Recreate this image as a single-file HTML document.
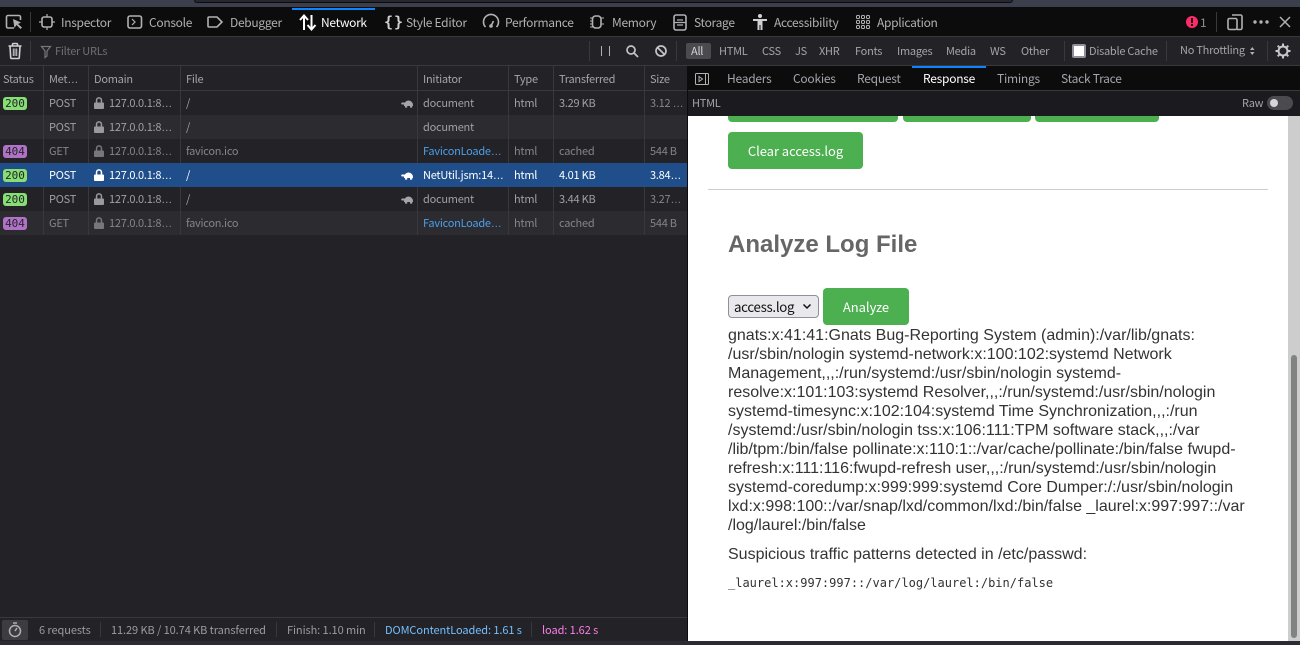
<!DOCTYPE html>
<html><head><meta charset="utf-8"><style>
html,body{margin:0;padding:0;width:1300px;height:645px;overflow:hidden;background:#232327}
*{box-sizing:border-box}
.t{position:absolute;white-space:nowrap;font:12px/16px "Noto Sans CJK JP","Liberation Sans",sans-serif;color:#b1b1b3;letter-spacing:-.25px}
.tb{color:#b1b1b3;font-size:12px;letter-spacing:-.3px}
.f{color:#a5a5a8;font-size:11px}
.s{letter-spacing:-.08px}
.r{position:absolute;left:0;width:688px;height:24px}
.c{color:#a0a0a3;font-size:11px}
.v{position:absolute;width:1px;background:#38383d}
.b{position:absolute;left:3px;width:24px;height:13px;border-radius:3px;font:11px/13px "DejaVu Sans Mono",monospace;text-align:center;color:#26262a}
i{font-family:"Liberation Sans",sans-serif;font-style:normal;letter-spacing:0}
svg{position:absolute;overflow:visible}
.i{fill:none;stroke:#b1b1b3;stroke-width:1.6}
.w{position:absolute;font:16px/19px "Liberation Sans",sans-serif;color:#333;white-space:nowrap}
.g{position:absolute;background:#4caf50;border-radius:4px;color:#fff;text-align:center;font:13px/37px "Noto Sans CJK JP","Liberation Sans",sans-serif;letter-spacing:-.05px}
</style></head><body>
<div style="position:absolute;left:0;top:0;width:1300px;height:7px;background:#3b3e4b"></div>
<div style="position:absolute;left:194px;top:0;width:819px;height:3px;background:#26272f;border:1px solid #0c0c10;border-top:0;border-radius:0 0 4px 4px"></div>
<div style="position:absolute;left:0;top:7px;width:1300px;height:29px;background:#0c0c0d"></div>
<div style="position:absolute;left:0;top:36px;width:1300px;height:1px;background:#38383d"></div>
<div style="position:absolute;left:0;top:37px;width:1300px;height:28px;background:#232327"></div>
<div style="position:absolute;left:0;top:65px;width:1300px;height:1px;background:#38383d"></div>
<div style="position:absolute;left:292px;top:8px;width:83px;height:2px;background:#0a84ff"></div>

<!-- toolbar icons -->
<svg class="i" style="left:0;top:0" width="60" height="36"><path d="M14 28H8a1.500 1.500 0 0 1-1.500-1.500V17A1.500 1.500 0 0 1 8 15.500h11a1.500 1.500 0 0 1 1.500 1.500v3"/><path d="M13 19l1.500 9 2-3 4 4 1.500-1.500-4-3.500 3-1.500z" fill="#b1b1b3" stroke="none"/></svg>
<div style="position:absolute;left:30px;top:12px;width:1px;height:20px;background:#38383d"></div>
<svg class="i" style="left:0;top:0" width="60" height="36"><rect x="42" y="17" width="10" height="10" rx="2"/><path d="M47 14v3M47 27v3M39 22h3M52 22h3" stroke-width="1.200"/></svg>
<div class="t tb" style="left:61px;top:15px">Inspector</div>
<svg class="i" style="left:0;top:0" width="150" height="36"><rect x="128" y="16" width="13.500" height="12" rx="2"/><path d="M132 19l3 3-3 3" stroke-width="1.200"/></svg>
<div class="t tb" style="left:149px;top:15px">Console</div>
<svg class="i" style="left:0;top:0" width="240" height="36"><path d="M209 17h8l5 5-5 5h-8a1 1 0 0 1-1-1v-8a1 1 0 0 1 1-1z"/></svg>
<div class="t tb" style="left:230px;top:15px">Debugger</div>
<svg style="left:0;top:0" width="320" height="36" fill="none" stroke="#fff" stroke-width="2"><path d="M304 30V16M300 20l4-4.500 4 4.500M311.500 15v14M307.500 25l4 4.500 4-4.500"/></svg>
<div class="t tb" style="left:321px;top:15px;color:#fff">Network</div>
<div class="t" style="left:384px;top:12px;font:bold 15px/20px 'DejaVu Sans Mono',monospace;color:#d0d0d2;letter-spacing:1px">{}</div>
<div class="t tb" style="left:406px;top:15px">Style Editor</div>
<svg class="i" style="left:0;top:0" width="520" height="36"><path d="M485.500 27a7.500 7.500 0 1 1 11 0"/><circle cx="491" cy="26" r="1.800" fill="#b1b1b3" stroke="none"/><path d="M491 26l2.500-5"/></svg>
<div class="t tb" style="left:505px;top:15px">Performance</div>
<svg class="i" style="left:0;top:0" width="620" height="36"><rect x="592.500" y="16" width="8.500" height="12" rx="3"/><path d="M590 18h3M590 21h3M590 24h3M590 27h3M601 18h3M601 24h3" stroke-width="1"/></svg>
<div class="t tb" style="left:612px;top:15px">Memory</div>
<svg class="i" style="left:0;top:0" width="700" height="36"><rect x="674" y="15" width="12" height="15" rx="2"/><path d="M677 20h6M677 25h6M674 22.500h12" stroke-width="1.200"/></svg>
<div class="t tb" style="left:694px;top:15px">Storage</div>
<svg style="left:0;top:0" width="780" height="36" fill="#d0d0d2"><circle cx="760" cy="16" r="2"/><path d="M753 19h14v2h-4.500v9h-2v-5h-1v5h-2v-9H753z"/></svg>
<div class="t tb" style="left:774px;top:15px">Accessibility</div>
<svg style="left:0;top:0" width="880" height="36" fill="none" stroke="#b1b1b3" stroke-width="1"><g id="d"><rect x="856.500" y="15.500" width="3" height="3" rx="1"/><rect x="861.500" y="15.500" width="3" height="3" rx="1"/><rect x="866.500" y="15.500" width="3" height="3" rx="1"/><rect x="856.500" y="20.500" width="3" height="3" rx="1"/><rect x="861.500" y="20.500" width="3" height="3" rx="1"/><rect x="866.500" y="20.500" width="3" height="3" rx="1"/><rect x="856.500" y="25.500" width="3" height="3" rx="1"/><rect x="861.500" y="25.500" width="3" height="3" rx="1"/><rect x="866.500" y="25.500" width="3" height="3" rx="1"/></g></svg>
<div class="t tb" style="left:877px;top:15px">Application</div>
<svg style="left:0;top:0" width="1210" height="36"><circle cx="1192" cy="22" r="6" fill="#ff2a6a"/><rect x="1191" y="18" width="2" height="5" fill="#111"/><rect x="1191" y="24" width="2" height="2" fill="#111"/></svg>
<div class="t" style="left:1200px;top:15px;color:#8f8f92">1</div>
<div style="position:absolute;left:1216px;top:12px;width:1px;height:20px;background:#38383d"></div>
<svg class="i" style="left:0;top:0" width="1300" height="36"><rect x="1228" y="18.500" width="9" height="11" rx="1.500"/><path d="M1232 15h8.500a1.500 1.500 0 0 1 1.500 1.500V28a1.500 1.500 0 0 1-1.500 1.500H1237"/><path d="M1280 17l10 10M1290 17l-10 10" stroke-width="1.500"/></svg>
<svg style="left:0;top:0" width="1280" height="36" fill="#b1b1b3"><circle cx="1255" cy="22" r="1.700"/><circle cx="1261" cy="22" r="1.700"/><circle cx="1267" cy="22" r="1.700"/></svg>

<!-- filter bar -->
<svg style="left:0;top:0" width="30" height="66" fill="none" stroke="#d0d0d2" stroke-width="1.600"><path d="M8.500 46h13M12.500 46v-1.500a1 1 0 0 1 1-1h3a1 1 0 0 1 1 1V46M10 46.500l.7 11a1 1 0 0 0 1 1h6.600a1 1 0 0 0 1-1l.7-11"/><path d="M13.300 48.500v7.500M15 48.500v7.500M16.700 48.500v7.500" stroke-width="1"/></svg>
<div style="position:absolute;left:30px;top:41px;width:1px;height:20px;background:#38383d"></div>
<svg style="left:0;top:0" width="60" height="66" fill="none" stroke="#77777a" stroke-width="1.200"><path d="M41.500 46.500h9l-3.500 4.500v5l-2 1.500V51z"/></svg>
<div class="t f" style="left:55px;top:43px;color:#6f6f73">Filter URLs</div>
<div style="position:absolute;left:589px;top:41px;width:1px;height:20px;background:#38383d"></div>
<div style="position:absolute;left:601px;top:46px;width:1px;height:10px;background:#b1b1b3"></div>
<div style="position:absolute;left:609px;top:46px;width:1px;height:10px;background:#b1b1b3"></div>
<svg style="left:0;top:0" width="680" height="66" fill="none" stroke="#c4c4c6" stroke-width="1.700"><circle cx="631" cy="50" r="4"/><path d="M634 53l4 4"/><circle cx="661" cy="51" r="5"/><path d="M657.500 47.500l7 7"/></svg>
<div style="position:absolute;left:676px;top:41px;width:1px;height:20px;background:#38383d"></div>
<div style="position:absolute;left:686px;top:43px;width:25px;height:16px;background:#4a4a4f;border-radius:2px"></div>
<div class="t f" style="left:691px;top:43px;color:#d7d7db">All</div>
<div class="t f" style="left:719px;top:43px">HTML</div>
<div class="t f" style="left:762px;top:43px">CSS</div>
<div class="t f" style="left:795px;top:43px">JS</div>
<div class="t f" style="left:819px;top:43px">XHR</div>
<div class="t f" style="left:855px;top:43px">Fonts</div>
<div class="t f" style="left:897px;top:43px">Images</div>
<div class="t f" style="left:946px;top:43px">Media</div>
<div class="t f" style="left:990px;top:43px">WS</div>
<div class="t f" style="left:1021px;top:43px">Other</div>
<div style="position:absolute;left:1064px;top:41px;width:1px;height:20px;background:#38383d"></div>
<div style="position:absolute;left:1072px;top:44px;width:14px;height:14px;background:#fff;border:2px solid #8f8f9d;border-radius:2px"></div>
<div class="t f" style="left:1089px;top:43px">Disable Cache</div>
<div style="position:absolute;left:1166px;top:41px;width:1px;height:20px;background:#38383d"></div>
<div class="t f" style="left:1180px;top:42px">No Throttling</div>
<svg style="left:0;top:0" width="1260" height="66" fill="#b1b1b3"><path d="M1250 50l2.250-3 2.250 3zM1250 52h4.500l-2.250 3z"/></svg>
<div style="position:absolute;left:1267px;top:41px;width:1px;height:20px;background:#38383d"></div>
<svg style="left:0;top:0" width="1300" height="66" fill="none" stroke="#c8c8ca"><circle cx="1283" cy="51" r="4.500" stroke-width="2"/><path d="M1283 43.500v3M1283 55.500v3M1275.500 51h3M1287.500 51h3M1277.700 45.700l2 2M1286.300 54.300l2 2M1288.300 45.700l-2 2M1279.700 54.300l-2 2" stroke-width="2"/></svg>

<!-- table header -->
<div style="position:absolute;left:0;top:66px;width:688px;height:24px;background:#232327"></div>
<div style="position:absolute;left:0;top:90px;width:688px;height:1px;background:#38383d"></div>
<div class="t f" style="left:3px;top:71px">Status</div>
<div class="t f" style="left:49px;top:71px">Met<i>…</i></div>
<div class="t f" style="left:94px;top:71px">Domain</div>
<div class="t f" style="left:186px;top:71px">File</div>
<div class="t f" style="left:423px;top:71px">Initiator</div>
<div class="t f" style="left:514px;top:71px">Type</div>
<div class="t f" style="left:559px;top:71px">Transferred</div>
<div class="t f" style="left:650px;top:71px">Size</div>

<!-- rows -->
<div style="position:absolute;left:0;top:91px;width:688px;height:526px;background:#232327"></div>
<div class="r" style="top:91px;background:#232327"></div>
<div class="r" style="top:115px;background:#2c2c30"></div>
<div class="r" style="top:139px;background:#232327"></div>
<div class="r" style="top:163px;background:#204e8a"></div>
<div class="r" style="top:187px;background:#232327"></div>
<div class="r" style="top:211px;background:#2c2c30"></div>
<div class="v" style="left:43px;top:66px;height:169px"></div>
<div class="v" style="left:88px;top:66px;height:169px"></div>
<div class="v" style="left:180px;top:66px;height:169px"></div>
<div class="v" style="left:417px;top:66px;height:169px"></div>
<div class="v" style="left:508px;top:66px;height:169px"></div>
<div class="v" style="left:553px;top:66px;height:169px"></div>
<div class="v" style="left:644px;top:66px;height:169px"></div>
<div class="r" style="top:163px;height:24px;background:#204e8a;z-index:0"></div>

<div class="b" style="top:97px;background:#86de74">200</div>
<div class="b" style="top:145px;background:#b072c6">404</div>
<div class="b" style="top:169px;background:#86de74">200</div>
<div class="b" style="top:193px;background:#86de74">200</div>
<div class="b" style="top:217px;background:#b072c6">404</div>

<div class="t c" style="left:49px;top:95px">POST</div>
<div class="t c" style="left:49px;top:119px">POST</div>
<div class="t c" style="left:49px;top:143px;color:#858588">GET</div>
<div class="t c" style="left:49px;top:167px;color:#fff">POST</div>
<div class="t c" style="left:49px;top:191px">POST</div>
<div class="t c" style="left:49px;top:215px;color:#858588">GET</div>

<svg style="left:0;top:0" width="110" height="235">
<path fill="#9a9a9d" d="M95 102.500h8a1 1 0 0 1 1 1v4.500a1 1 0 0 1-1 1h-8a1 1 0 0 1-1-1v-4.500a1 1 0 0 1 1-1zM95.800 102.500v-2.200a3.200 3.200 0 0 1 6.400 0v2.200h-1.500v-2.200a1.700 1.700 0 0 0-3.400 0v2.200z"/>
<path fill="#9a9a9d" transform="translate(0 24)" d="M95 102.500h8a1 1 0 0 1 1 1v4.500a1 1 0 0 1-1 1h-8a1 1 0 0 1-1-1v-4.500a1 1 0 0 1 1-1zM95.800 102.500v-2.200a3.200 3.200 0 0 1 6.400 0v2.200h-1.500v-2.200a1.700 1.700 0 0 0-3.400 0v2.200z"/>
<path fill="#77777a" transform="translate(0 48)" d="M95 102.500h8a1 1 0 0 1 1 1v4.500a1 1 0 0 1-1 1h-8a1 1 0 0 1-1-1v-4.500a1 1 0 0 1 1-1zM95.800 102.500v-2.200a3.200 3.200 0 0 1 6.400 0v2.200h-1.500v-2.200a1.700 1.700 0 0 0-3.400 0v2.200z"/>
<path fill="#fff" transform="translate(0 72)" d="M95 102.500h8a1 1 0 0 1 1 1v4.500a1 1 0 0 1-1 1h-8a1 1 0 0 1-1-1v-4.500a1 1 0 0 1 1-1zM95.800 102.500v-2.200a3.200 3.200 0 0 1 6.400 0v2.200h-1.500v-2.200a1.700 1.700 0 0 0-3.400 0v2.200z"/>
<path fill="#9a9a9d" transform="translate(0 96)" d="M95 102.500h8a1 1 0 0 1 1 1v4.500a1 1 0 0 1-1 1h-8a1 1 0 0 1-1-1v-4.500a1 1 0 0 1 1-1zM95.800 102.500v-2.200a3.200 3.200 0 0 1 6.400 0v2.200h-1.500v-2.200a1.700 1.700 0 0 0-3.400 0v2.200z"/>
<path fill="#77777a" transform="translate(0 120)" d="M95 102.500h8a1 1 0 0 1 1 1v4.500a1 1 0 0 1-1 1h-8a1 1 0 0 1-1-1v-4.500a1 1 0 0 1 1-1zM95.800 102.500v-2.200a3.200 3.200 0 0 1 6.400 0v2.200h-1.500v-2.200a1.700 1.700 0 0 0-3.400 0v2.200z"/>
</svg>

<div class="t c" style="left:109px;top:95px">127.0.0.1:8<i>…</i></div>
<div class="t c" style="left:109px;top:119px">127.0.0.1:8<i>…</i></div>
<div class="t c" style="left:109px;top:143px;color:#858588">127.0.0.1:8<i>…</i></div>
<div class="t c" style="left:109px;top:167px;color:#fff">127.0.0.1:8<i>…</i></div>
<div class="t c" style="left:109px;top:191px">127.0.0.1:8<i>…</i></div>
<div class="t c" style="left:109px;top:215px;color:#858588">127.0.0.1:8<i>…</i></div>

<div class="t c" style="left:186px;top:95px">/</div>
<div class="t c" style="left:186px;top:119px">/</div>
<div class="t c" style="left:186px;top:143px;color:#858588">favicon.ico</div>
<div class="t c" style="left:186px;top:167px;color:#fff">/</div>
<div class="t c" style="left:186px;top:191px">/</div>
<div class="t c" style="left:186px;top:215px;color:#858588">favicon.ico</div>

<svg style="left:0;top:0" width="415" height="210">
<path fill="#a5a5a8" d="M404 105a4.500 4.500 0 0 1 9 0v1h-9zM402.200 102.500h2a1 1 0 0 1 1 1v1h-3a1 1 0 0 1 0-2zM405 106h2.200v1.600H405zM410 106h2.200v1.600H410z"/>
<path fill="#fff" transform="translate(0 72)" d="M404 105a4.500 4.500 0 0 1 9 0v1h-9zM402.200 102.500h2a1 1 0 0 1 1 1v1h-3a1 1 0 0 1 0-2zM405 106h2.200v1.600H405zM410 106h2.200v1.600H410z"/>
<path fill="#a5a5a8" transform="translate(0 96)" d="M404 105a4.500 4.500 0 0 1 9 0v1h-9zM402.200 102.500h2a1 1 0 0 1 1 1v1h-3a1 1 0 0 1 0-2zM405 106h2.200v1.600H405zM410 106h2.200v1.600H410z"/>
</svg>

<div class="t c" style="left:423px;top:95px">document</div>
<div class="t c" style="left:423px;top:119px">document</div>
<div class="t c" style="left:423px;top:143px;color:#4a9eea">FaviconLoade<i>…</i></div>
<div class="t c" style="left:423px;top:167px;color:#fff">NetUtil.jsm:14<i>…</i></div>
<div class="t c" style="left:423px;top:191px">document</div>
<div class="t c" style="left:423px;top:215px;color:#4a9eea">FaviconLoade<i>…</i></div>

<div class="t c" style="left:514px;top:95px">html</div>
<div class="t c" style="left:514px;top:143px;color:#858588">html</div>
<div class="t c" style="left:514px;top:167px;color:#fff">html</div>
<div class="t c" style="left:514px;top:191px">html</div>
<div class="t c" style="left:514px;top:215px;color:#858588">html</div>

<div class="t c" style="left:559px;top:95px">3.29 KB</div>
<div class="t c" style="left:559px;top:143px;color:#858588">cached</div>
<div class="t c" style="left:559px;top:167px;color:#fff">4.01 KB</div>
<div class="t c" style="left:559px;top:191px">3.44 KB</div>
<div class="t c" style="left:559px;top:215px;color:#858588">cached</div>

<div class="t c" style="left:650px;top:95px;color:#858588">3.12 <i>…</i></div>
<div class="t c" style="left:650px;top:143px;color:#858588">544 B</div>
<div class="t c" style="left:650px;top:167px;color:#fff">3.84<i>…</i></div>
<div class="t c" style="left:650px;top:191px;color:#858588">3.27<i>…</i></div>
<div class="t c" style="left:650px;top:215px;color:#858588">544 B</div>

<!-- status bar -->
<div style="position:absolute;left:0;top:617px;width:688px;height:1px;background:#38383d"></div>
<div style="position:absolute;left:0;top:618px;width:688px;height:23px;background:#232327"></div>
<div style="position:absolute;left:2px;top:620px;width:26px;height:20px;background:#3d3d41;border-radius:2px"></div>
<svg style="left:0;top:0" width="30" height="645" fill="none" stroke="#b1b1b3" stroke-width="1.500"><circle cx="15" cy="631" r="5.500"/><path d="M13 623h4M15 631l2-3"/></svg>
<div class="t f s" style="left:39px;top:622px;color:#9c9c9f">6 requests</div>
<div class="v" style="left:100px;top:622px;height:15px"></div>
<div class="t f s" style="left:111px;top:622px;color:#9c9c9f">11.29 KB / 10.74 KB transferred</div>
<div class="v" style="left:276px;top:622px;height:15px"></div>
<div class="t f s" style="left:287px;top:622px;color:#9c9c9f">Finish: 1.10 min</div>
<div class="v" style="left:374px;top:622px;height:15px"></div>
<div class="t f s" style="left:385px;top:622px;color:#75bfff">DOMContentLoaded: 1.61 s</div>
<div class="v" style="left:531px;top:622px;height:15px"></div>
<div class="t f s" style="left:542px;top:622px;color:#ff7de9">load: 1.62 s</div>
<div style="position:absolute;left:0;top:641px;width:1300px;height:4px;background:#2a2b33"></div>

<!-- response panel -->
<div class="v" style="left:687px;top:66px;height:575px;background:#0c0c0d"></div>
<div style="position:absolute;left:688px;top:66px;width:612px;height:24px;background:#0c0c0d"></div>
<div style="position:absolute;left:688px;top:90px;width:612px;height:1px;background:#38383d"></div>
<div style="position:absolute;left:688px;top:91px;width:612px;height:25px;background:#1b1b1f"></div>
<div style="position:absolute;left:912px;top:66px;width:74px;height:2px;background:#0a84ff"></div>
<svg style="left:0;top:0" width="720" height="90" fill="none" stroke="#b1b1b3" stroke-width="1"><rect x="695.500" y="73.500" width="13" height="11" rx="1"/><path d="M705.500 73.500v11"/><path d="M699 76.500l3.500 2.500-3.500 2.500z" stroke-width="1"/></svg>
<div class="t f" style="left:727px;top:71px;font-size:12px">Headers</div>
<div class="t f" style="left:793px;top:71px;font-size:12px">Cookies</div>
<div class="t f" style="left:857px;top:71px;font-size:12px">Request</div>
<div class="t f" style="left:923px;top:71px;font-size:12px;color:#fff">Response</div>
<div class="t f" style="left:997px;top:71px;font-size:12px">Timings</div>
<div class="t f" style="left:1061px;top:71px;font-size:12px">Stack Trace</div>
<div class="t f" style="left:692px;top:95px">HTML</div>
<div class="t f" style="left:1242px;top:95px">Raw</div>
<div style="position:absolute;left:1267px;top:96px;width:26px;height:14px;background:#4a4a4f;border-radius:7px"></div>
<div style="position:absolute;left:1270px;top:99px;width:8px;height:8px;background:#d7d7db;border-radius:50%"></div>

<div style="position:absolute;left:688px;top:116px;width:612px;height:525px;background:#fff;overflow:hidden">
<div class="g" style="left:40px;top:-26px;width:170px;height:32px"></div>
<div class="g" style="left:215px;top:-26px;width:128px;height:32px"></div>
<div class="g" style="left:347px;top:-26px;width:124px;height:32px"></div>
<div class="g" style="left:40px;top:16px;width:135px;height:37px">Clear access.log</div>
<div style="position:absolute;left:20px;top:73px;width:560px;height:1px;background:#ccc"></div>
<div style="position:absolute;left:40px;top:114px;font:bold 24px/30px 'Liberation Sans',sans-serif;color:#666;white-space:nowrap">Analyze Log File</div>
<div style="position:absolute;left:40px;top:179px;width:91px;height:23px;background:#e9e9ed;border:1px solid #8f8f9d;border-radius:4px;font:13.300px/21px 'Noto Sans CJK JP','Liberation Sans',sans-serif;letter-spacing:-.3px;color:#111;padding-left:5px">access.log</div>
<svg style="left:0;top:0" width="130" height="200" fill="none" stroke="#111" stroke-width="1.500"><path d="M115.500 188.500l3.500 3.500 3.500-3.500"/></svg>
<div class="g" style="left:135px;top:172px;width:86px;height:37px">Analyze</div>
<div class="w" style="left:40px;top:210px">gnats:x:41:41:Gnats Bug-Reporting System (admin):/var/lib/gnats:<br>/usr/sbin/nologin systemd-network:x:100:102:systemd Network<br>Management,,,:/run/systemd:/usr/sbin/nologin systemd-<br>resolve:x:101:103:systemd Resolver,,,:/run/systemd:/usr/sbin/nologin<br>systemd-timesync:x:102:104:systemd Time Synchronization,,,:/run<br>/systemd:/usr/sbin/nologin tss:x:106:111:TPM software stack,,,:/var<br>/lib/tpm:/bin/false pollinate:x:110:1::/var/cache/pollinate:/bin/false fwupd-<br>refresh:x:111:116:fwupd-refresh user,,,:/run/systemd:/usr/sbin/nologin<br>systemd-coredump:x:999:999:systemd Core Dumper:/:/usr/sbin/nologin<br>lxd:x:998:100::/var/snap/lxd/common/lxd:/bin/false _laurel:x:997:997::/var<br>/log/laurel:/bin/false</div>
<div class="w" style="left:40px;top:429px">Suspicious traffic patterns detected in /etc/passwd:</div>
<div style="position:absolute;left:40px;top:460px;font:12px/15px 'DejaVu Sans Mono',monospace;color:#333;white-space:nowrap">_laurel:x:997:997::/var/log/laurel:/bin/false</div>
<div style="position:absolute;left:600px;top:0;width:12px;height:525px;background:#cdcdcd"></div>
<div style="position:absolute;left:603px;top:239px;width:6px;height:283px;background:#7f8382;border-radius:3px"></div>
</div>
</body></html>
